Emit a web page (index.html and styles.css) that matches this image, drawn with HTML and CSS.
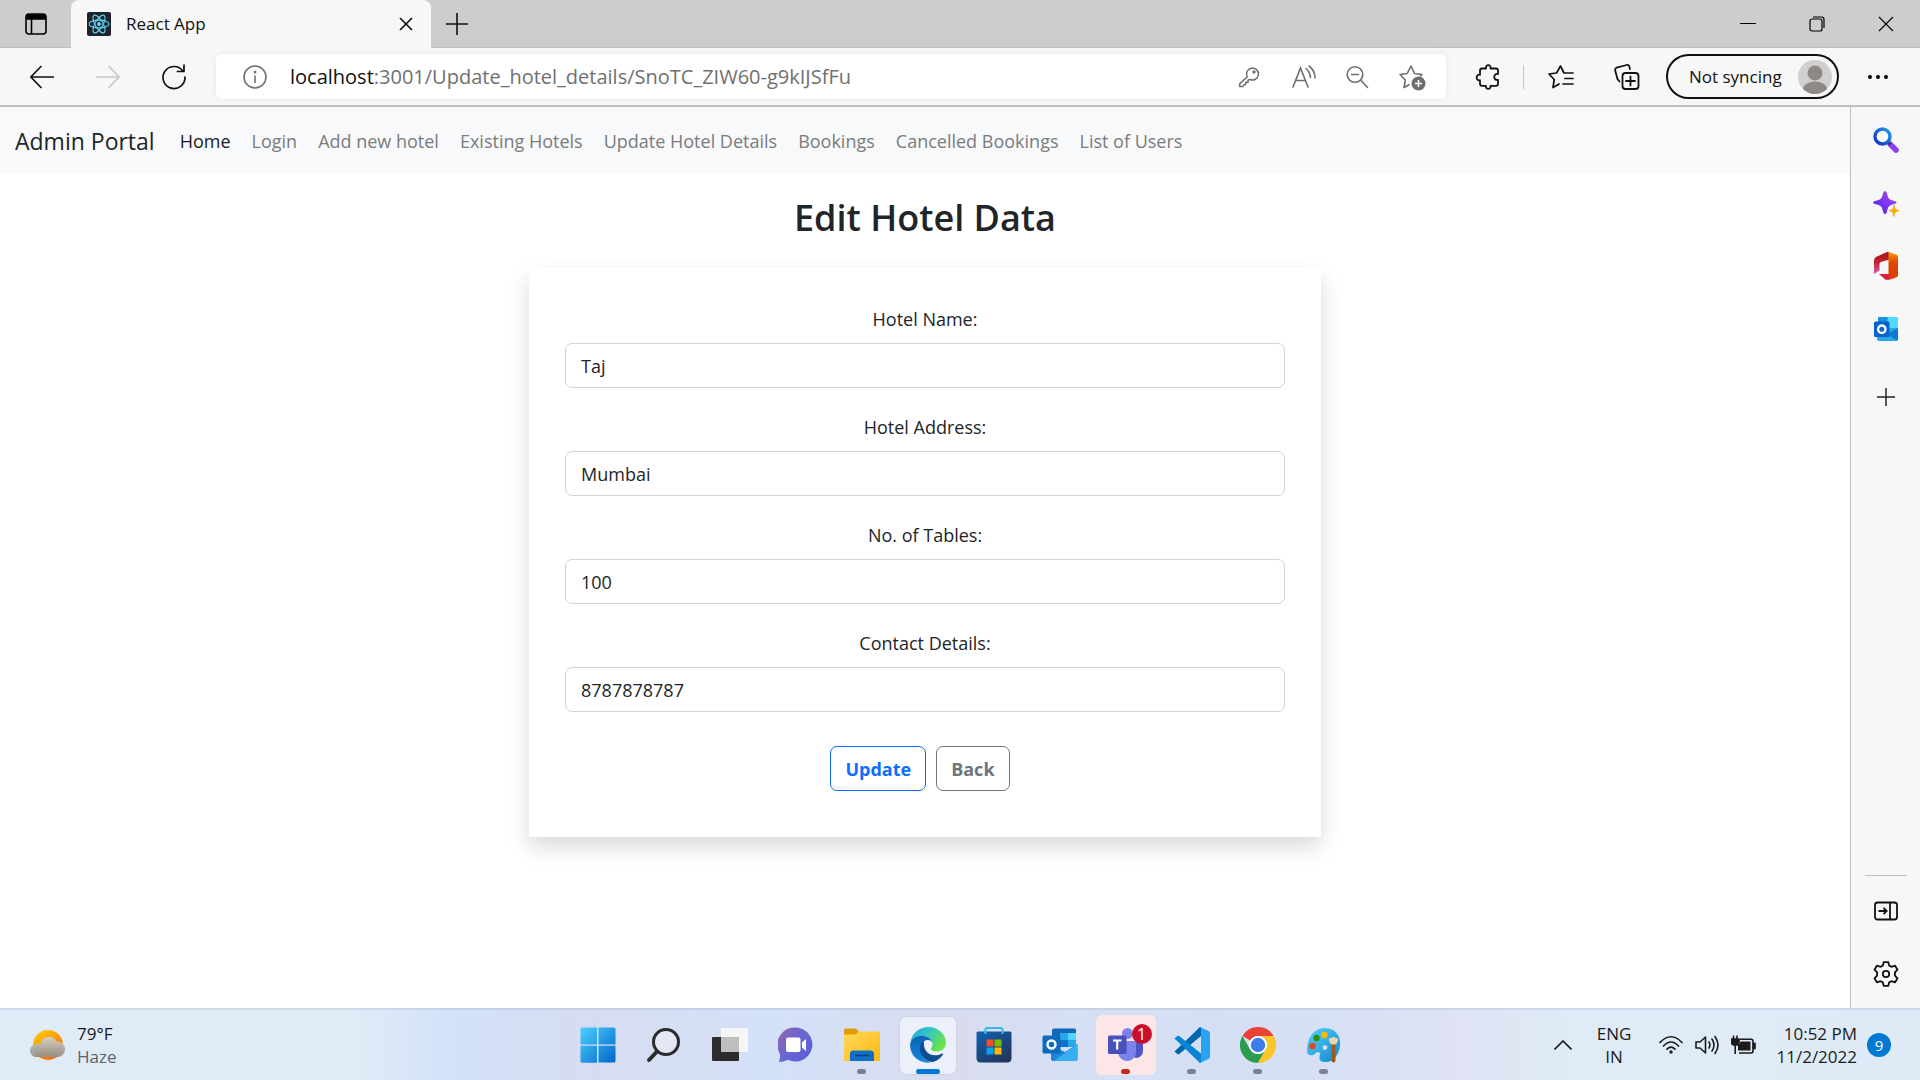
FILE: index.html
```html
<!DOCTYPE html>
<html lang="en">
<head>
<meta charset="utf-8">
<meta name="viewport" content="width=device-width, initial-scale=1">
<title>React App</title>
<link rel="stylesheet" href="styles.css">
</head>
<body>
<div class="tabstrip">
  <button class="icon-btn tab-actions" aria-label="Tab actions">
    <svg width="22" height="22" viewBox="0 0 22 22" fill="none" stroke="#000" stroke-width="1.6"><rect x="1" y="1" width="20" height="20" rx="3"/><path d="M2 2h18v4H2z" fill="#000"/><path d="M6.5 6v15"/></svg>
  </button>
  <div class="tab">
    <svg class="tab-icon" width="24" height="24" viewBox="0 0 24 24"><rect width="24" height="24" rx="2" fill="#20232a"/><g fill="none" stroke="#61dafb" stroke-width="1.1"><ellipse cx="12" cy="12" rx="10" ry="3.9"/><ellipse cx="12" cy="12" rx="10" ry="3.9" transform="rotate(60 12 12)"/><ellipse cx="12" cy="12" rx="10" ry="3.9" transform="rotate(120 12 12)"/></g><circle cx="12" cy="12" r="2" fill="#61dafb"/></svg>
    <span class="tab-title">React App</span>
    <button class="icon-btn" aria-label="Close tab"><svg width="14" height="14" viewBox="0 0 14 14" stroke="#111" stroke-width="1.7"><path d="M1 1l12 12M13 1L1 13"/></svg></button>
  </div>
  <button class="icon-btn new-tab" aria-label="New tab"><svg width="22" height="22" viewBox="0 0 22 22" stroke="#111" stroke-width="1.6"><path d="M11 0v22M0 11h22"/></svg></button>
  <div class="window-controls">
    <button class="icon-btn" aria-label="Minimize"><svg width="16" height="16" viewBox="0 0 16 16" stroke="#000"><path d="M0 7.5h16"/></svg></button>
    <button class="icon-btn" aria-label="Restore"><svg width="16" height="16" viewBox="0 0 16 16" fill="none" stroke="#000" stroke-width="1.2"><rect x="1" y="3" width="12" height="12" rx="2"/><path d="M4 1h8.5q2.5 0 2.5 2.5V12"/></svg></button>
    <button class="icon-btn" aria-label="Close"><svg width="16" height="16" viewBox="0 0 16 16" stroke="#000" stroke-width="1.1"><path d="M1 1l14 14M15 1L1 15"/></svg></button>
  </div>
</div>

<div class="toolbar">
  <div class="history">
    <button class="icon-btn" aria-label="Back"><svg width="24" height="24" viewBox="0 0 24 24" fill="none" stroke="#111" stroke-width="1.7" stroke-linecap="round" stroke-linejoin="round"><path d="M23.5 12H1M11 1.5L.8 12 11 22.500"/></svg></button>
    <button class="icon-btn" aria-label="Forward" disabled><svg width="24" height="24" viewBox="0 0 24 24" fill="none" stroke="#c8c8c8" stroke-width="1.7" stroke-linecap="round" stroke-linejoin="round"><path d="M.5 12H23M13 1.5L23.2 12 13 22.5"/></svg></button>
    <button class="icon-btn" aria-label="Refresh"><svg width="24" height="26" viewBox="0 0 24 26" fill="none" stroke="#111" stroke-width="1.7" stroke-linecap="round" stroke-linejoin="round"><path d="M23 13A11 11 0 1 1 20.5 6.500M22 1v6.5h-6.5"/></svg></button>
  </div>
  <div class="address">
    <button class="icon-btn site-info" aria-label="Site information"><svg width="24" height="24" viewBox="0 0 24 24" fill="none" stroke="#707070" stroke-width="1.6"><circle cx="12" cy="12" r="11"/><path d="M12 10.5v7.5"/><circle cx="12" cy="7.2" r=".6" fill="#707070"/></svg></button>
    <span class="url"><span class="host">localhost</span>:3001/Update_hotel_details/SnoTC_ZIW60-g9kIJSfFu</span>
    <div class="address-tools">
      <button class="icon-btn" aria-label="Passwords"><svg width="26" height="26" viewBox="0 0 26 26" fill="none" stroke="#6e6e6e" stroke-width="1.5" stroke-linejoin="round"><path d="M11.2 12.9A6 6 0 1 1 14 15.5l-2 .5v2.2h-2.200v2.3H8l-1 2H3.7v-2.800z"/><circle cx="18" cy="8" r=".9" fill="#6e6e6e"/></svg></button>
      <button class="icon-btn" aria-label="Read aloud"><svg width="26" height="26" viewBox="0 0 26 26" fill="none" stroke="#6e6e6e" stroke-width="1.6" stroke-linecap="round"><path d="M3 23L10.5 4 18 23M5.5 16.5h10M16 4.5q4 3.500 4.5 9M19 2q6 4.5 6 12"/></svg></button>
      <button class="icon-btn" aria-label="Zoom out"><svg width="26" height="26" viewBox="0 0 26 26" fill="none" stroke="#6e6e6e" stroke-width="1.6" stroke-linecap="round"><circle cx="11" cy="10.5" r="7.8"/><path d="M17 16.5l6.5 7M7.5 10.5h7"/></svg></button>
      <button class="icon-btn" aria-label="Add to favorites"><svg width="28" height="28" viewBox="0 0 28 28" fill="none" stroke="#6e6e6e" stroke-width="1.6" stroke-linejoin="round"><path d="M11.5 21.5L6 24.5l1.300-7.500L2 11.500l7.200-1L13 3l3.5 7.5 7.5 1-2 2"/><circle cx="20.5" cy="20.5" r="7" fill="#6e6e6e" stroke="none"/><path d="M20.5 17v7M17 20.5h7" stroke="#fff"/></svg></button>
    </div>
  </div>
  <div class="actions">
    <button class="icon-btn extensions" aria-label="Extensions"><svg width="26" height="26" viewBox="0 0 26 26" fill="none" stroke="#111" stroke-width="1.8" stroke-linejoin="round"><path d="M7 4.500h4C10 0 16.500 0 15.500 4.500h5.500q2 0 2 2V10c-5-1.200-5 7 0 5.800v4q0 2-2 2h-5.500c1 4-5.500 4-4.500 0H7q-2 0-2-2v-3.600c-4.500 1-4.500-6.400 0-5.400V6.500q0-2 2-2"/></svg></button>
    <span class="divider"></span>
    <button class="icon-btn" aria-label="Favorites"><svg width="26" height="26" viewBox="0 0 26 26" fill="none" stroke="#111" stroke-width="1.7" stroke-linejoin="round" stroke-linecap="round"><path d="M11 20l-6 3.500 1.200-8L1 10l7.500-1L12.500 2 16 9h9M17 14.500h8M15 20h10"/></svg></button>
    <button class="icon-btn" aria-label="Collections"><svg width="26" height="26" viewBox="0 0 26 26" fill="none" stroke="#111" stroke-width="1.8" stroke-linecap="round"><path d="M5.500 17.500L3.500 15 1.200 6.500q-.5-2 1.500-2.800l10-2.700q2-.5 2.600 1.500L16 5"/><rect x="8.500" y="9" width="16" height="16" rx="3"/><path d="M16.500 12.500v9M12 17h9"/></svg></button>
    <button class="profile">Not syncing
      <svg width="34" height="34" viewBox="0 0 34 34"><defs><clipPath id="av"><circle cx="17" cy="17" r="17"/></clipPath></defs><circle cx="17" cy="17" r="17" fill="#d2d0ce"/><g clip-path="url(#av)" fill="#8d8985"><circle cx="17" cy="13" r="7.500"/><ellipse cx="17" cy="29" rx="12" ry="7.500"/></g></svg>
    </button>
    <button class="icon-btn more" aria-label="Settings and more"><svg width="20" height="6" viewBox="0 0 20 6"><circle cx="2" cy="3" r="2"/><circle cx="10" cy="3" r="2"/><circle cx="18" cy="3" r="2"/></svg></button>
  </div>
</div>

<div class="window">
  <div class="page">
    <nav class="navbar">
      <a class="brand" href="#">Admin Portal</a>
      <a class="nav-link active" href="#">Home</a>
      <a class="nav-link" href="#">Login</a>
      <a class="nav-link" href="#">Add new hotel</a>
      <a class="nav-link" href="#">Existing Hotels</a>
      <a class="nav-link" href="#">Update Hotel Details</a>
      <a class="nav-link" href="#">Bookings</a>
      <a class="nav-link" href="#">Cancelled Bookings</a>
      <a class="nav-link" href="#">List of Users</a>
    </nav>
    <main class="content">
      <h1>Edit Hotel Data</h1>
      <form class="card">
        <div class="field"><label for="name">Hotel Name:</label><input id="name" type="text" value="Taj"></div>
        <div class="field"><label for="address">Hotel Address:</label><input id="address" type="text" value="Mumbai"></div>
        <div class="field"><label for="tables">No. of Tables:</label><input id="tables" type="text" value="100"></div>
        <div class="field"><label for="contact">Contact Details:</label><input id="contact" type="text" value="8787878787"></div>
        <div class="buttons">
          <button class="btn btn-primary" type="button">Update</button>
          <button class="btn btn-secondary" type="button">Back</button>
        </div>
      </form>
    </main>
  </div>
  <aside class="sidebar">
    <button class="icon-btn" aria-label="Search"><svg width="26" height="28" viewBox="0 0 26 28"><defs><linearGradient id="sg" x1="0" y1="1" x2="1" y2="0"><stop offset="0" stop-color="#0a2fc4"/><stop offset="1" stop-color="#2c9be0"/></linearGradient></defs><path d="M17 18l6 6" stroke="#8a3ff0" stroke-width="5.500" stroke-linecap="round"/><path d="M15.500 16.500l2 2" stroke="#333a58" stroke-width="3"/><circle cx="9.500" cy="10.500" r="7.500" fill="#fff" stroke="url(#sg)" stroke-width="3.400"/></svg></button>
    <button class="icon-btn" aria-label="Discover"><svg width="26" height="28" viewBox="0 0 26 28"><defs><linearGradient id="dg" x1="0" y1="1" x2="1" y2="0"><stop offset="0" stop-color="#4a22f0"/><stop offset="1" stop-color="#b04cf2"/></linearGradient></defs><path d="M12 2q1.500 0 2 2.500c1 5 2 6 6.500 7.200 4 1 4 2.600 0 3.600-4.500 1.200-5.500 2.200-6.500 7.200q-.5 2.500-2 2.500t-2-2.500c-1-5-2-6-7-7.200-4-1-4-2.600 0-3.600 5-1.200 6-2.200 7-7.200Q10.500 2 12 2z" fill="url(#dg)"/><path d="M21 16c.7 4 1.200 5 5 5.700-3.800.7-4.300 1.500-5 5.700-.7-4.200-1.200-5-5-5.700 3.800-.7 4.300-1.700 5-5.700z" fill="#f2ab00" stroke="#f2ab00" stroke-linejoin="round"/></svg></button>
    <button class="icon-btn" aria-label="Office"><svg width="26" height="28" viewBox="0 0 26 28"><defs><linearGradient id="og" x1="0" y1="0" x2="0" y2="1"><stop offset="0" stop-color="#ff9a00"/><stop offset=".35" stop-color="#e04a00"/><stop offset="1" stop-color="#d83b01"/></linearGradient><linearGradient id="ol" x1="0" y1="0" x2="0" y2="1"><stop offset="0" stop-color="#a01414"/><stop offset=".5" stop-color="#c62530"/><stop offset="1" stop-color="#d665b5"/></linearGradient></defs><path d="M1 8.500Q1 6 3 5L14 0h2v7.500L8 10q-1.500.5-1.500 2v6.500L1 22z" fill="url(#ol)"/><path d="M15.500 0L23 2.500q2 .5 2 2.500v18q0 2-2 2.500L15.500 28z" fill="url(#og)"/><path d="M6 22h10v5.500l-3 .5z" fill="#d91f3c"/></svg></button>
    <button class="icon-btn" aria-label="Outlook"><svg width="26" height="28" viewBox="0 0 26 28"><path d="M6 2h17q1.500 0 1.500 1.500V14H5V3q0-1 1-1z" fill="#1490df"/><path d="M14.500 2H23q1.500 0 1.500 1.500V13h-10z" fill="#50d9ff"/><path d="M4 13h21v11q0 2-2 2H6q-2 0-2-2z" fill="#28a8ea"/><path d="M25 13v11q0 1.500-1 1.500L14 19z" fill="#0f78d4"/><rect x="1" y="6.500" width="15.500" height="15.500" rx="1.500" fill="#0a64c8"/><circle cx="8.800" cy="14.200" r="3.700" fill="none" stroke="#fff" stroke-width="2.300"/></svg></button>
    <button class="icon-btn add" aria-label="Customize"><svg width="18" height="18" viewBox="0 0 18 18" stroke="#222" stroke-width="1.500"><path d="M9 0v18M0 9h18"/></svg></button>
    <span class="sidebar-rule"></span>
    <button class="icon-btn" aria-label="Hide sidebar"><svg width="24" height="28" viewBox="0 0 24 28" fill="none" stroke="#111" stroke-width="1.800"><rect x="1" y="5.500" width="22" height="17" rx="2.500"/><path d="M16 5.500v17M4.500 14h8M9.500 10.800l3.200 3.200-3.200 3.200"/></svg></button>
    <button class="icon-btn" aria-label="Settings"><svg width="26" height="28" viewBox="0 0 26 28" fill="none" stroke="#111" stroke-width="1.800" stroke-linejoin="round"><path d="M10.700 2.200h4.600l.9 3.400 2.200 1.200 3.700-1.100 2.400 4-2.600 2.700v3.200l2.600 2.700-2.400 4-3.700-1.100-2.200 1.200-.9 3.400h-4.600l-.9-3.400-2.200-1.200-3.700 1.100-2.400-4 2.600-2.700v-3.200L1.500 9.700l2.400-4 3.700 1.100 2.200-1.200z"/><circle cx="13" cy="14" r="3.200"/></svg></button>
  </aside>
</div>

<footer class="taskbar">
  <button class="weather">
    <svg width="36" height="32" viewBox="0 0 36 32"><defs><linearGradient id="wg" x1="0" y1="0" x2=".6" y2="1"><stop offset="0" stop-color="#ffd400"/><stop offset="1" stop-color="#f26a10"/></linearGradient><linearGradient id="wc" x1="0" y1="0" x2="0" y2="1"><stop offset="0" stop-color="#d3d4ca"/><stop offset="1" stop-color="#8f8d89"/></linearGradient></defs><circle cx="18" cy="16" r="15" fill="url(#wg)"/><path d="M7 28a6.500 6.500 0 0 1-1-13 7 7 0 0 1 4.500 0 8.500 8.500 0 0 1 16-2.500A7.500 7.500 0 0 1 28 28z" fill="url(#wc)" opacity=".93"/></svg>
    <span class="weather-text"><span>79°F</span><span class="muted">Haze</span></span>
  </button>
  <div class="apps">
    <button class="app" aria-label="Start"><svg width="36" height="36" viewBox="0 0 36 36"><defs><linearGradient id="st" x1="0" y1="0" x2="1" y2="1"><stop offset="0" stop-color="#4cd0ff"/><stop offset="1" stop-color="#0067c8"/></linearGradient></defs><path d="M2 .5h15v17H.5V2Q.5.500 2 .5zM18.500.5H34q1.500 0 1.500 1.500v15.500h-17zM.5 18.800H17v17H2q-1.500 0-1.500-1.500zM18.500 18.800h17V34q0 1.500-1.500 1.500H18.500z" fill="url(#st)"/></svg></button>
    <button class="app" aria-label="Search"><svg width="36" height="36" viewBox="0 0 36 36" fill="none" stroke="#2b2b2b" stroke-linecap="round"><circle cx="20" cy="15" r="12.500" stroke-width="3" fill="#e3e8f4"/><path d="M11 24.500l-8 8.500" stroke-width="4"/></svg></button>
    <button class="app" aria-label="Task view"><svg width="36" height="36" viewBox="0 0 36 36"><rect x="0" y="10" width="27" height="24" rx="1" fill="#2c2c2c"/><rect x="9" y="1" width="27" height="24" rx="1" fill="#f6f6f6"/><path d="M9 10h18v15H9z" fill="#bfbfbf"/></svg></button>
    <button class="app" aria-label="Chat"><svg width="36" height="36" viewBox="0 0 36 36"><defs><linearGradient id="ch" x1="0" y1="0" x2="1" y2=".8"><stop offset="0" stop-color="#9a63a8"/><stop offset=".5" stop-color="#6a67d0"/><stop offset="1" stop-color="#5b5fd8"/></linearGradient></defs><path d="M18 .5a17 17 0 1 1-8 32.300Q6 35 1 35q1.500-4 .8-8.500A17.300 17.300 0 0 1 18 .5z" fill="url(#ch)"/><rect x="8" y="10.500" width="14.500" height="14.500" rx="2" fill="#fff"/><path d="M24 15.500l4-3.500v12l-4-3.500z" fill="#fff"/></svg></button>
    <button class="app open" aria-label="File Explorer"><svg width="36" height="36" viewBox="0 0 36 36"><defs><linearGradient id="fe" x1="0" y1="0" x2="1" y2="1"><stop offset="0" stop-color="#ffd85c"/><stop offset="1" stop-color="#fbb911"/></linearGradient></defs><path d="M0 3q0-1.500 1.500-1.500H11q1.500 0 2.500 1.500l1.500 2V10H0z" fill="#e09a07"/><path d="M0 7.500h11.500l3.500-3h19.500Q36 4.500 36 6v28H0z" fill="url(#fe)"/><path d="M6 34v-7q0-3.500 3.500-3.500h17Q30 23.500 30 27v7z" fill="#0f70c6"/><path d="M11 28.500h14" stroke="#0a4588" stroke-width="1.600"/></svg></button>
    <button class="app open current" aria-label="Edge"><svg width="36" height="36" viewBox="0 0 36 36"><defs><linearGradient id="e1" x1="0" y1="0" x2="1" y2=".5"><stop offset="0" stop-color="#259be0"/><stop offset=".45" stop-color="#2fc4c9"/><stop offset="1" stop-color="#6be34c"/></linearGradient><linearGradient id="e2" x1="0" y1="0" x2="0" y2="1"><stop offset="0" stop-color="#0d60b0"/><stop offset="1" stop-color="#1388e0"/></linearGradient></defs><path d="M.5 15A18 18 0 0 1 18 0c11 0 18 8 18 15.500 0 5.500-4 9-9 9-4.500 0-6-1.800-6-2.800s1.500-1.500 1.500-4.700c0-4-4-7.500-9.500-7.500C5 9.500.5 15 .5 15z" fill="url(#e1)"/><path d="M.2 17C1 11.500 7 9 12 9c6.500 0 10.500 4 10.500 7 0-1.500-2-3-5-3-4 0-7 4-7 9.500 0 7 5 12 11 12.800C10.500 38-.9 29 .2 17z" fill="url(#e2)"/><path d="M14 13.800c-5 3-5.500 10.500-1.500 16 3 4.200 8 5.700 11 5 4-1 7.500-4 9.300-7 .6-1-.2-1.600-1.300-1-8 4-19 .5-17.500-13z" fill="#124c94"/></svg></button>
    <button class="app" aria-label="Store"><svg width="36" height="36" viewBox="0 0 36 36"><defs><linearGradient id="ms" x1="0" y1="0" x2=".7" y2="1"><stop offset="0" stop-color="#0d62b5"/><stop offset="1" stop-color="#24365e"/></linearGradient></defs><path d="M9.500 8V2.500q0-1.500 1.500-1.500h14q1.500 0 1.500 1.500V8" fill="none" stroke="#35b6ec" stroke-width="2"/><path d="M.5 6q0-1.500 1.500-1.500h32q1.500 0 1.500 1.500v25q0 4.500-4.500 4.500H5Q.5 35.500.5 31z" fill="url(#ms)"/><path d="M9.500 2V7M26.500 2V7" stroke="#44c3f3" stroke-width="2"/><path fill="#f25022" d="M10.500 12.500h7v7h-7z"/><path fill="#7fba00" d="M18.500 12.500h7v7h-7z"/><path fill="#00a4ef" d="M10.500 20.500h7v7h-7z"/><path fill="#ffb900" d="M18.500 20.500h7v7h-7z"/></svg></button>
    <button class="app" aria-label="Outlook"><svg width="36" height="36" viewBox="0 0 36 36"><path d="M11 1.500h21.500q1.500 0 1.500 1.500v15H10V3z" fill="#0f68b8"/><path d="M18 6h8v7h-8z" fill="#2ba6e8"/><path d="M26 6h8v7h-8z" fill="#4fd3ff"/><path d="M18 13h8v7h-8z" fill="#0a74cf"/><path d="M26 13h8v7h-8z" fill="#2ba6e8"/><path d="M9 18l14 7 12.500-8v15q0 2-2 2H11q-2 0-2-2z" fill="#1c86dc"/><path d="M35.500 17v15q0 2-2 2H12z" fill="#38b0ef"/><rect x=".5" y="8.500" width="18" height="18" rx="1.500" fill="#0f6cbd"/><circle cx="9.500" cy="17.500" r="4" fill="none" stroke="#fff" stroke-width="2.400"/></svg></button>
    <button class="app open alert" aria-label="Teams"><svg width="36" height="36" viewBox="0 0 36 36"><circle cx="19.500" cy="6.500" r="5.500" fill="#7b83eb"/><path d="M25 14h10v10a7 7 0 0 1-8 7z" fill="#4f55c4"/><path d="M9 14h19v10a9 9 0 0 1-18 2z" fill="#7b83eb"/><rect x="0" y="8.500" width="18.500" height="18.500" rx="1.500" fill="#4a50ba"/><path d="M5 13.500h8.500M9.200 13.500v9" stroke="#fff" stroke-width="2.200"/></svg><span class="badge">1</span></button>
    <button class="app open" aria-label="Visual Studio Code"><svg width="36" height="36" viewBox="0 0 36 36"><path d="M.5 24.500l2.800 2.500q1 .6 2 0L27 9V0h-1z" fill="#0066b0"/><path d="M.5 11.500L3.300 9q1-.6 2 0L27 26.500V36h-1z" fill="#0a84d2"/><path d="M26.500.2L34.500 4q1.500.7 1.500 2.500v23q0 1.800-1.500 2.500l-8 3.800q-1 .3-1.500-.5.800.3 2-.8V1.500Q26.200.5 25 .8q.5-.8 1.500-.6z" fill="#2aa2f2"/></svg></button>
    <button class="app open" aria-label="Chrome"><svg width="36" height="36" viewBox="0 0 36 36"><path d="M2.400 9A18 18 0 0 1 33.600 9H18a9 9 0 0 0-7.800 4.500z" fill="#ea4335"/><path d="M2.400 9A18 18 0 0 0 18 36l7.800-13.500a9 9 0 0 1-15.600 0z" fill="#2c9e4b"/><path d="M33.600 9A18 18 0 0 1 18 36l7.800-13.500A9 9 0 0 0 18 9z" fill="#fcc629"/><circle cx="18" cy="18" r="9" fill="#fff"/><circle cx="18" cy="18" r="7.200" fill="#3b7de9"/></svg></button>
    <button class="app open" aria-label="Paint"><svg width="36" height="36" viewBox="0 0 36 36"><defs><linearGradient id="pt" x1="0" y1="0" x2="1" y2="1"><stop offset="0" stop-color="#54d3f8"/><stop offset="1" stop-color="#1585d0"/></linearGradient></defs><path d="M19 1C30 1 35 10 34 19c-1 8-6 16-14.500 16C11 35 14 29 14 27s-3-3-5 0c-2 2-8 2-8-3C1 12 7 1 19 1z" fill="url(#pt)"/><circle cx="6.500" cy="19" r="3.200" fill="#d84a1b"/><circle cx="10.500" cy="11" r="3.200" fill="#2c8f0e"/><circle cx="18.500" cy="8" r="3.200" fill="#fdb900"/><circle cx="19" cy="20.500" r="2.300" fill="#dfe7f7"/><path d="M25.500 17h4v16.500q0 2-2 2t-2-2z" fill="#a35a12"/><path d="M23 11q2 1 4.500-1.500Q29.500 12 32 11q0 5-2.500 6.500h-4Q23 16 23 11z" fill="#ead5b0"/></svg></button>
  </div>
  <div class="tray">
    <button class="icon-btn" aria-label="Show hidden icons"><svg width="18" height="10" viewBox="0 0 18 10" fill="none" stroke="#1b1b1b" stroke-width="1.600"><path d="M.5 9.500L9 1l8.500 8.500"/></svg></button>
    <button class="lang"><span>ENG</span><span>IN</span></button>
    <button class="status" aria-label="Network, volume and battery">
      <svg width="24" height="20" viewBox="0 0 24 20" fill="none" stroke="#1b1b1b" stroke-width="1.700" stroke-linecap="round"><path d="M1 7.500q11-11.500 22 0M4.500 11q7.500-8 15 0M8 14.200q4-4.200 8 0"/><circle cx="12" cy="17" r="1.700" fill="#1b1b1b" stroke="none"/></svg>
      <svg width="24" height="20" viewBox="0 0 24 20" fill="none" stroke="#1b1b1b" stroke-width="1.600" stroke-linecap="round" stroke-linejoin="round"><path d="M1 7h4l5.500-5v16L5 13H1zM14 7q1.800 3 0 6M17 4q4 6 0 12M20 1.500q6 8.500 0 17"/></svg>
      <svg width="26" height="20" viewBox="0 0 26 20" fill="none" stroke="#1b1b1b" stroke-width="1.600"><path d="M9 4.200h11q2 0 2 2V16q0 2-2 2H8"/><path d="M9.500 6.500h10v9H7V10q2-1 2.500-3.500z" fill="#1b1b1b" stroke="none"/><path d="M22.500 8.500H24v5h-1.500z" fill="#1b1b1b"/><path d="M.5 4h7.500v3.500q0 2-2 2.500H2.500q-2-.5-2-2.500zM2.500 4V.5M6 4V.5" fill="#1b1b1b"/><path d="M4.200 9v10"/></svg>
    </button>
    <button class="clock"><span>10:52 PM</span><span>11/2/2022</span></button>
    <span class="count">9</span>
  </div>
</footer>
</body>
</html>
```
FILE: styles.css
```css
* { box-sizing: border-box; }
body {
  margin: 0;
  min-height: 100vh;
  display: flex;
  flex-direction: column;
  font-family: "Open Sans", "Noto Sans", sans-serif;
  font-size: 18px;
  line-height: 30px;
  color: #212529;
  background: #f7f7f7;
}
button { font: inherit; color: inherit; border: 0; background: none; padding: 0; }
a { text-decoration: none; }
svg { display: block; flex: none; }
.icon-btn { display: flex; align-items: center; justify-content: center; }

/* Tab strip */
.tabstrip {
  display: flex;
  align-items: stretch;
  height: 48px;
  background: #cdcdcd;
  box-shadow: inset 0 -1px 0 #bdbdbd;
}
.tab-actions { width: 71px; }
.tab {
  display: flex;
  align-items: center;
  flex: 0 1 360px;
  padding: 0 18px 0 16px;
  background: #f7f7f7;
  border-radius: 8px 8px 0 0;
}
.tab-title { flex: 1; margin-left: 15px; font-size: 17px; color: #111; }
.new-tab { width: 52px; }
.window-controls { display: flex; margin-left: auto; }
.window-controls .icon-btn { width: 69px; }

/* Toolbar */
.toolbar {
  display: flex;
  align-items: center;
  height: 59px;
  padding: 0 32px 2px 30px;
  background: #f7f7f7;
  box-shadow: inset 0 -2px 0 #bfbfbf;
}
.history { display: flex; gap: 42px; margin-right: 30px; }
.address {
  display: flex;
  align-items: center;
  flex: 1;
  height: 45px;
  padding: 0 20px 0 27px;
  background: #fff;
  border-radius: 6px;
  box-shadow: 0 0 6px #e6e6e6;
}
.url { margin-left: 23px; font-size: 20px; color: #707070; white-space: nowrap; }
.host { color: #111; }
.address-tools { display: flex; gap: 28px; margin-left: auto; }
.actions { display: flex; align-items: center; gap: 26px; margin-left: 29px; }
.divider { width: 1px; height: 24px; background: #c6c6c6; }
.extensions { margin-right: -4px; }
.actions .divider + .icon-btn { margin: 0 14px 0 -2px; }
.profile {
  display: flex;
  align-items: center;
  justify-content: space-between;
  width: 173px;
  height: 45px;
  padding: 0 5px 0 21px;
  border: 2px solid #111;
  border-radius: 23px;
  font-size: 17px;
  color: #111;
  white-space: nowrap;
}
.more { margin-left: 3px; }

/* Browser window body */
.window { display: flex; flex: 1; }
.page { flex: 1; background: #fff; border-right: 1px solid #bfbfbf; }
.sidebar {
  display: flex;
  flex-direction: column;
  align-items: center;
  gap: 35px;
  width: 69px;
  padding: 19px 0 20px;
  background: #f7f7f7;
}
.sidebar .add { height: 28px; margin-top: 5px; }
.sidebar-rule { width: 42px; height: 1px; margin: auto 0 -14px; background: #bfbfbf; }

/* Site navigation */
.navbar {
  display: flex;
  align-items: center;
  gap: 21px;
  height: 67px;
  padding: 0 15px;
  background: #f8f9fa;
  white-space: nowrap;
}
.brand { margin-right: 4px; font-size: 23px; color: #212529; }
.nav-link { color: #7a7b7d; }
.nav-link.active { color: #1a1b1c; }

/* Form */
.content { display: flex; flex-direction: column; align-items: center; padding: 20px 0; }
h1 { margin: 0 0 26px; font-size: 36px; font-weight: 600; line-height: 48px; }
.card {
  width: 792px;
  max-width: 100%;
  padding: 36px 36px 46px;
  background: #fff;
  box-shadow: 0 10px 20px rgba(0, 0, 0, .15);
}
.field { display: flex; flex-direction: column; gap: 9px; margin-bottom: 24px; }
.field label { text-align: center; }
.field input {
  height: 45px;
  padding: 0 15px;
  border: 1px solid #ced4da;
  border-radius: 7px;
  font: inherit;
  color: #212529;
}
.buttons { display: flex; justify-content: center; gap: 10px; padding: 10px 10px 0 0; }
.btn { height: 45px; padding: 0 14px; border: 1px solid; border-radius: 7px; font-weight: 700; }
.btn-primary { color: #0d6efd; }
.btn-secondary { color: #6c757d; }

/* Taskbar */
.taskbar {
  display: grid;
  grid-template-columns: 1fr auto 1fr;
  align-items: center;
  height: 72px;
  padding: 2px 29px 0 30px;
  font-size: 17px;
  line-height: 23px;
  color: #1b1b1b;
  background: linear-gradient(90deg, #dfebf6 0%, #e1ecf6 18%, #d2e1f9 24%, #d7dcf1 31%, #d3e1f8 40%, #d9dcef 50%, #d5e0f5 58%, #d6dff4 68%, #dfe3f3 76%, #dfebf7 82%, #deebf6 100%);
  box-shadow: inset 0 2px 0 rgba(150, 165, 200, .25);
}
.weather { display: flex; align-items: center; gap: 11px; text-align: left; }
.weather-text, .lang, .clock { display: flex; flex-direction: column; }
.muted { color: #5d6469; }
.apps { display: flex; gap: 6px; }
.app {
  position: relative;
  display: flex;
  align-items: center;
  justify-content: center;
  width: 60px;
  height: 60px;
  border-radius: 6px;
}
.app.open::after {
  content: "";
  position: absolute;
  bottom: 1px;
  width: 9px;
  height: 5px;
  border-radius: 3px;
  background: #7c828c;
}
.app.current { width: 56px; height: 57px; margin: 2px; background: #ebf0fa; box-shadow: 0 0 1px 1px #cfd6e6; }
.app.current::after { bottom: 0; width: 24px; background: #0078d4; }
.app.alert { background: #fce6e8; }
.app.alert::after { background: #c42b1c; }
.badge {
  position: absolute;
  top: 9px;
  right: 4px;
  width: 20px;
  height: 20px;
  border-radius: 50%;
  background: #c8102e;
  color: #fff;
  font-size: 16px;
  line-height: 20px;
}
.tray { display: flex; align-items: center; justify-content: flex-end; }
.lang { width: 84px; align-items: center; }
.status { display: flex; align-items: center; gap: 12px; margin: 0 20px 0 3px; }
.clock { width: 80px; align-items: flex-end; white-space: nowrap; }
.count {
  width: 24px;
  height: 24px;
  margin-left: 10px;
  border-radius: 50%;
  background: #0078d4;
  color: #fff;
  font-size: 15px;
  line-height: 24px;
  text-align: center;
}
```
